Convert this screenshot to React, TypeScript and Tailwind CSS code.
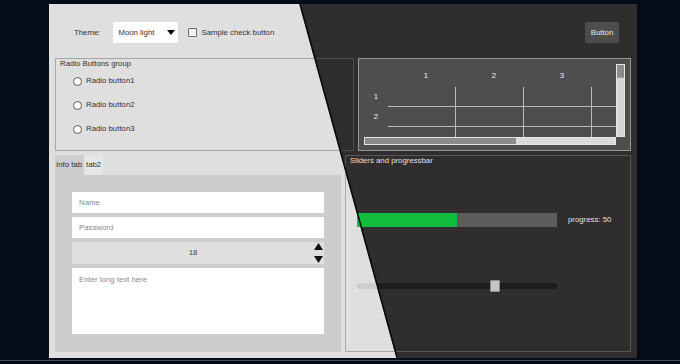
import React from "react";

function Win({ dark }: { dark: boolean }) {
  return (
    <div
      className={`flex h-[354px] w-[588px] flex-col p-[6px] ${
        dark ? "bg-[#302d2e] text-[#e3e3e3]" : "bg-[#dfdfdf] text-[#333333]"
      }`}
    >
      {/* header */}
      <div className="h-[48px] pt-[12px]">
        <div className="flex h-[21px] items-center">
          <span className="ml-[19px] whitespace-nowrap">Theme:</span>
          <div
            className={`ml-[13px] flex h-[21px] w-[65px] items-center justify-between pl-[5px] pr-[3px] ${
              dark ? "bg-[#4a4849] text-[#e3e3e3]" : "bg-white text-[#333333]"
            }`}
          >
            <span className="whitespace-nowrap">Moon light</span>
            <svg width="8" height="5" viewBox="0 0 8 5">
              <path d="M0 0H8L4 5Z" fill={dark ? "#e3e3e3" : "#000000"} />
            </svg>
          </div>
          <div
            className={`ml-[10px] h-[9px] w-[9px] rounded-[1px] border ${
              dark ? "border-[#8a8a8a] bg-[#3a3a3a]" : "border-[#6d6d6d] bg-[#f3f3f3]"
            }`}
          />
          <span className="ml-[4px] whitespace-nowrap">Sample check button</span>
          <div
            className={`ml-auto mr-[12px] flex h-[21px] w-[34px] items-center justify-center rounded-[2px] ${
              dark ? "bg-[#4e4c4d] text-[#e8e8e8]" : "bg-[#c9c9c9] text-[#333333]"
            }`}
          >
            Button
          </div>
        </div>
      </div>

      {/* top row */}
      <div className="flex h-[93px] gap-[4px]">
        <div
          className={`flex w-[299px] flex-col border ${
            dark ? "border-[#4b4b4b]" : "border-[#a6a6a6]"
          }`}
        >
          <div className="h-[10px] pl-[4px] whitespace-nowrap">Radio Buttons group</div>
          <div className="flex flex-col">
            {["Radio button1", "Radio button2", "Radio button3"].map((r) => (
              <div key={r} className="flex h-[24px] items-center gap-[4px] pl-[17px]">
                <div
                  className={`h-[9px] w-[9px] rounded-full border ${
                    dark ? "border-[#9a9a9a] bg-[#3a3a3a]" : "border-[#5a5a5a] bg-white"
                  }`}
                />
                <span className="whitespace-nowrap">{r}</span>
              </div>
            ))}
          </div>
        </div>

        <div
          className={`w-[273px] border p-[5px] ${
            dark ? "border-[#979797] bg-[#4e4e4e] text-[#eeeeee]" : "border-[#9a9a9a] bg-white text-[#333333]"
          }`}
        >
          <div className="grid h-[81px] grid-cols-[252px_9px] grid-rows-[73px_8px]">
            <div className="overflow-hidden">
              <div className="flex h-[23px]">
                <div className="w-[24px] shrink-0" />
                {["1", "2", "3", ""].map((c, i) => (
                  <div key={i} className="flex w-[68px] shrink-0 items-center justify-center pl-[8px]">
                    {c}
                  </div>
                ))}
              </div>
              {["1", "2", ""].map((r, ri) => (
                <div key={ri} className="flex h-[20px]">
                  <div className="flex w-[24px] shrink-0 items-center justify-center">{r}</div>
                  {[0, 1, 2, 3].map((i) => (
                    <div
                      key={i}
                      className={`w-[68px] shrink-0 border-b border-r ${
                        dark ? "border-[#bababa]" : "border-[#d0d0d0]"
                      }`}
                    />
                  ))}
                </div>
              ))}
            </div>
            <div className="flex flex-col border border-[#e6e6e6] bg-[#d6d6d6]">
              <div className="h-[13px] border-b border-[#9a9a9a] bg-[#8b8b8b]" />
            </div>
            <div className="flex border border-[#e6e6e6] bg-[#dadada]">
              <div className="w-[151px] bg-[#8a8a8a]" />
            </div>
            <div />
          </div>
        </div>
      </div>

      {/* bottom row */}
      <div className="mt-[4px] flex h-[197px] gap-[4px]">
        <div className="flex w-[286px] flex-col">
          <div className="flex h-[20px]">
            <div
              className={`flex w-[29px] items-center whitespace-nowrap pl-[1px] ${
                dark ? "bg-[#3e3e3e]" : "bg-[#cdcdcd]"
              }`}
            >
              Info tab
            </div>
            <div
              className={`flex w-[19px] items-center whitespace-nowrap pl-[2px] ${
                dark ? "bg-[#2a2a2a]" : "bg-[#e6e6e6]"
              }`}
            >
              tab2
            </div>
          </div>
          <div
            className={`flex h-[177px] flex-col gap-[4px] p-[17px] ${
              dark ? "bg-[#3e3e3e]" : "bg-[#cdcdcd]"
            }`}
          >
            <div
              className={`flex h-[21px] items-center pl-[7px] ${
                dark ? "bg-[#4c4c4c] text-[#9a9a9a]" : "bg-white text-[#8a8a8a]"
              }`}
            >
              Name
            </div>
            <div
              className={`flex h-[21px] items-center pl-[7px] ${
                dark ? "bg-[#4c4c4c] text-[#9a9a9a]" : "bg-white text-[#8a8a8a]"
              }`}
            >
              Password
            </div>
            <div
              className={`flex h-[22px] items-center ${
                dark ? "bg-[#454545] text-[#dddddd]" : "bg-[#dfdfdf] text-[#444444]"
              }`}
            >
              <span className="flex-1 text-center">18</span>
              <svg width="9" height="22" viewBox="0 0 9 22" className="mr-[1px]">
                <path d="M4.5 1L9 8H0Z" fill={dark ? "#dddddd" : "#111111"} />
                <path d="M0 14H9L4.5 21Z" fill={dark ? "#dddddd" : "#111111"} />
              </svg>
            </div>
            <div
              className={`h-[66px] px-[7px] pt-[7px] ${
                dark ? "bg-[#4c4c4c] text-[#9a9a9a]" : "bg-white text-[#8a8a8a]"
              }`}
            >
              Enter long text here
            </div>
          </div>
        </div>

        <div
          className={`flex flex-1 flex-col border pl-[11px] ${
            dark ? "border-[#575757] text-[#e0e0e0]" : "border-[#ababab] text-[#333333]"
          }`}
        >
          <div className="-ml-[7px] h-[10px] whitespace-nowrap">Sliders and progressbar</div>
          <div className="mt-[47px] flex h-[14px] items-center">
            <div className={`flex h-[14px] w-[200px] ${dark ? "bg-[#5b5d5b]" : "bg-[#c4c4c4]"}`}>
              <div className="w-[100px] bg-[#10bd3d]" />
            </div>
            <span className="ml-[11px] whitespace-nowrap">progress: 50</span>
          </div>
          <div className="relative mt-[53px] flex h-[12px] w-[200px] items-center">
            <div className={`h-[6px] w-[200px] rounded-full ${dark ? "bg-[#1e1e1e]" : "bg-[#cdcdcd]"}`} />
            <div className="absolute left-[133px] top-0 h-[12px] w-[10px] rounded-[1px] border border-[#8e8e8e] bg-[#c4c4c4]" />
          </div>
        </div>
      </div>
    </div>
  );
}

export default function App() {
  return (
    <div className="h-[364px] w-[680px] overflow-hidden bg-[#040c17] pl-[49px] pt-[4px] text-[7.8px] leading-[10px] [font-family:'Liberation_Sans',Arial,sans-serif]">
      <div className="relative h-[354px] w-[588px]">
        <Win dark />
        <div className="absolute inset-0 [clip-path:polygon(0_0,250.5px_0,347.5px_100%,0_100%)]">
          <Win dark={false} />
        </div>
        <svg className="pointer-events-none absolute inset-0" width="588" height="354" viewBox="0 0 588 354">
          <line x1="251" y1="0" x2="348.2" y2="354" stroke="#0a0a0a" strokeWidth="1.6" />
        </svg>
      </div>
      <div className="-ml-[49px] mt-[2px] h-[1px] w-[680px] bg-[#474c53]" />
    </div>
  );
}
